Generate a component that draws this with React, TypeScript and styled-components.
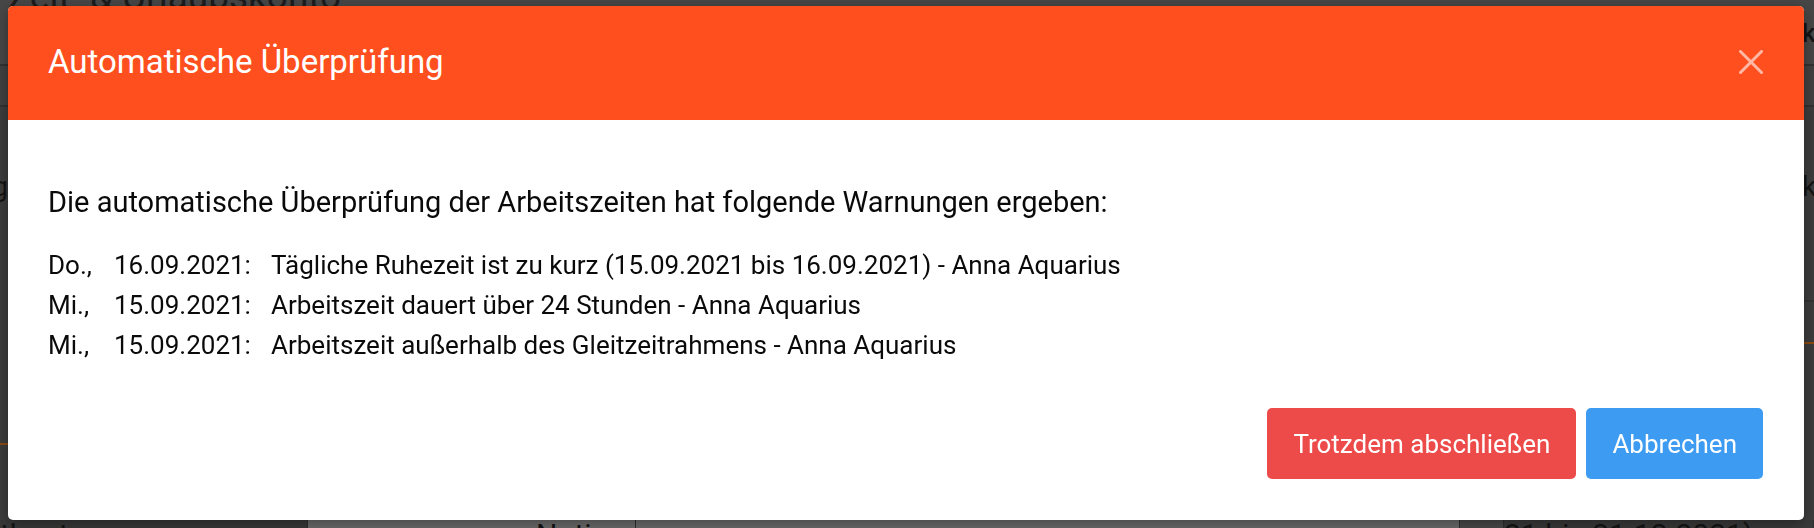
import React from "react";
import styled, { createGlobalStyle } from "styled-components";

const Global = createGlobalStyle`
  html, body { margin: 0; padding: 0; }
  body {
    background: #3d3d3d;
    font-family: Roboto, "Noto Sans", "Liberation Sans", Arial, sans-serif;
    overflow: hidden;
  }
`;

/* ---------- page behind the dialog ---------- */
const Page = styled.div`
  width: 1814px;
  height: 528px;
  overflow: hidden;
  display: flex;
  flex-direction: column;
  background: #3c3c3c;
`;

const PageHead = styled.header`
  height: 66px;
  box-sizing: border-box;
  border-bottom: 2px solid #323232;
  background: #474747;
  display: grid;
  grid-template-columns: 1fr 12px;
  overflow: hidden;
`;

const PageTitle = styled.h1`
  margin: -22px 0 0 8px;
  font-size: 37px;
  line-height: 37px;
  font-weight: 400;
  color: #1c1c1c;
  white-space: nowrap;
`;

const HeadAction = styled.span`
  padding-top: 18px;
  font-size: 26px;
  font-weight: 500;
  color: #151515;
  white-space: nowrap;
  overflow: hidden;
`;

const TabBar = styled.div`
  height: 41px;
  box-sizing: border-box;
  border-bottom: 2px solid #323232;
  background: #414141;
`;

const PageBody = styled.div`
  flex: 1;
  display: grid;
  grid-template-columns: 8px 1fr 12px;
  background: #3d3d3d;
`;

const SideColumn = styled.div<{ $align: "start" | "end" }>`
  display: flex;
  flex-direction: column;
  align-items: ${(p) => (p.$align === "end" ? "flex-end" : "flex-start")};
  overflow: hidden;
`;

const SideLabel = styled.span`
  margin-top: 60px;
  height: 40px;
  font-size: 28px;
  line-height: 40px;
  color: #141414;
  white-space: nowrap;
`;

const Rule = styled.div<{ $color: string; $top: number }>`
  align-self: stretch;
  height: 2px;
  flex: none;
  background: ${(p) => p.$color};
  margin-top: ${(p) => p.$top}px;
`;

const BottomRow = styled.div`
  height: 8px;
  flex: none;
  display: grid;
  grid-template-columns: 308px 328px 824px 44px 1fr;
  overflow: hidden;
`;

const BottomCell = styled.div<{ $tone: string; $pad?: number }>`
  background: ${(p) => p.$tone};
  border-right: 1px solid #2e2e2e;
  padding-left: ${(p) => p.$pad ?? 0}px;
  font-size: 30px;
  line-height: 30px;
  color: #151515;
  white-space: nowrap;
  overflow: hidden;
`;

/* ---------- dialog ---------- */
const Overlay = styled.div`
  position: fixed;
  inset: 0;
  display: flex;
  align-items: flex-start;
  padding: 6px 0 0 8px;
  box-sizing: border-box;
`;

const Dialog = styled.div`
  width: 1796px;
  background: #ffffff;
  border-radius: 5px;
  overflow: hidden;
  display: flex;
  flex-direction: column;
  box-shadow: 0 4px 14px rgba(0, 0, 0, 0.35);
`;

const Header = styled.div`
  height: 114px;
  box-sizing: border-box;
  background: #ff4f1f;
  display: flex;
  align-items: center;
  justify-content: space-between;
  padding: 0 41px 3px 40px;
`;

const Title = styled.h2`
  margin: 0;
  font-size: 33px;
  font-weight: 400;
  color: #ffffff;
  line-height: 1.2;
`;

const CloseButton = styled.button`
  width: 24px;
  height: 24px;
  padding: 0;
  border: 0;
  background: transparent;
  cursor: pointer;
  display: flex;
  color: rgba(255, 255, 255, 0.6);
`;

const Body = styled.div`
  padding: 64px 40px 0;
  color: #0a0a0a;
`;

const Lead = styled.p`
  margin: 0 0 25px;
  font-size: 29px;
  line-height: 36px;
`;

const WarningList = styled.div`
  display: grid;
  grid-template-columns: 66px 157px 1fr;
  grid-auto-rows: 40px;
  align-items: center;
  font-size: 26px;
`;

const Cell = styled.span`
  white-space: nowrap;
`;

const Footer = styled.div`
  display: flex;
  justify-content: flex-end;
  gap: 10px;
  padding: 43px 41px 41px;
`;

const Button = styled.button<{ $variant: "danger" | "primary" }>`
  height: 71px;
  padding: 0 26px;
  border: 0;
  border-radius: 5px;
  font-family: inherit;
  font-size: 26px;
  color: #ffffff;
  cursor: pointer;
  background: ${(p) => (p.$variant === "danger" ? "#ed4b4a" : "#3d9bf1")};
`;

const warnings = [
  {
    day: "Do.,",
    date: "16.09.2021:",
    text: "Tägliche Ruhezeit ist zu kurz (15.09.2021 bis 16.09.2021) - Anna Aquarius",
  },
  {
    day: "Mi.,",
    date: "15.09.2021:",
    text: "Arbeitszeit dauert über 24 Stunden - Anna Aquarius",
  },
  {
    day: "Mi.,",
    date: "15.09.2021:",
    text: "Arbeitszeit außerhalb des Gleitzeitrahmens - Anna Aquarius",
  },
];

export default function App() {
  return (
    <>
      <Global />
      <Page>
        <PageHead>
          <PageTitle>Zeit- &amp; Urlaubskonto</PageTitle>
          <HeadAction>ko</HeadAction>
        </PageHead>
        <TabBar />
        <PageBody>
          <SideColumn $align="end">
            <SideLabel>Montag</SideLabel>
            <Rule $color="#8a4a12" $top={236} />
          </SideColumn>
          <div />
          <SideColumn $align="start">
            <SideLabel>k</SideLabel>
            <Rule $color="#333333" $top={93} />
            <Rule $color="#8a4a12" $top={40} />
          </SideColumn>
        </PageBody>
        <BottomRow>
          <BottomCell $tone="#393939" $pad={0}>tkonto</BottomCell>
          <BottomCell $tone="#6c6c6c" $pad={228}>Notiz</BottomCell>
          <BottomCell $tone="#6c6c6c" />
          <BottomCell $tone="#4a4a4a" />
          <BottomCell $tone="#3a3a3a">21 bis 31.12.2021)</BottomCell>
        </BottomRow>
      </Page>

      <Overlay>
        <Dialog role="dialog" aria-modal="true">
          <Header>
            <Title>Automatische Überprüfung</Title>
            <CloseButton aria-label="Schließen">
              <svg width="24" height="24" viewBox="0 0 24 24" fill="none">
                <path d="M1.5 1.5 L22.5 22.5 M22.5 1.5 L1.5 22.5" stroke="currentColor" strokeWidth="3" strokeLinecap="round" />
              </svg>
            </CloseButton>
          </Header>
          <Body>
            <Lead>
              Die automatische Überprüfung der Arbeitszeiten hat folgende Warnungen ergeben:
            </Lead>
            <WarningList>
              {warnings.map((w, i) => (
                <React.Fragment key={i}>
                  <Cell>{w.day}</Cell>
                  <Cell>{w.date}</Cell>
                  <Cell>{w.text}</Cell>
                </React.Fragment>
              ))}
            </WarningList>
          </Body>
          <Footer>
            <Button $variant="danger">Trotzdem abschließen</Button>
            <Button $variant="primary">Abbrechen</Button>
          </Footer>
        </Dialog>
      </Overlay>
    </>
  );
}
